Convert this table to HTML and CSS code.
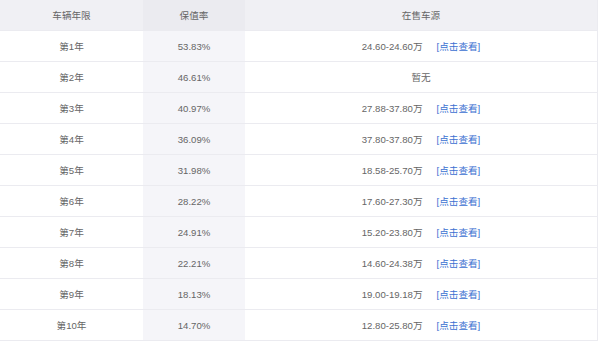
FILE: index.html
```html
<!DOCTYPE html>
<html lang="zh">
<head>
<meta charset="utf-8">
<link rel="stylesheet" href="styles.css">
</head>
<body>
<table class="tbl">
  <colgroup>
    <col class="c1"><col class="c2"><col class="c3">
  </colgroup>
  <thead>
    <tr><th>车辆年限</th><th class="mid">保值率</th><th>在售车源</th></tr>
  </thead>
  <tbody>
    <tr><td>第1年</td><td class="mid">53.83%</td><td><span class="price">24.60-24.60万</span><a class="link">[点击查看]</a></td></tr>
    <tr><td>第2年</td><td class="mid">46.61%</td><td>暂无</td></tr>
    <tr><td>第3年</td><td class="mid">40.97%</td><td><span class="price">27.88-37.80万</span><a class="link">[点击查看]</a></td></tr>
    <tr><td>第4年</td><td class="mid">36.09%</td><td><span class="price">37.80-37.80万</span><a class="link">[点击查看]</a></td></tr>
    <tr><td>第5年</td><td class="mid">31.98%</td><td><span class="price">18.58-25.70万</span><a class="link">[点击查看]</a></td></tr>
    <tr><td>第6年</td><td class="mid">28.22%</td><td><span class="price">17.60-27.30万</span><a class="link">[点击查看]</a></td></tr>
    <tr><td>第7年</td><td class="mid">24.91%</td><td><span class="price">15.20-23.80万</span><a class="link">[点击查看]</a></td></tr>
    <tr><td>第8年</td><td class="mid">22.21%</td><td><span class="price">14.60-24.38万</span><a class="link">[点击查看]</a></td></tr>
    <tr><td>第9年</td><td class="mid">18.13%</td><td><span class="price">19.00-19.18万</span><a class="link">[点击查看]</a></td></tr>
    <tr><td>第10年</td><td class="mid">14.70%</td><td><span class="price">12.80-25.80万</span><a class="link">[点击查看]</a></td></tr>
  </tbody>
</table>
</body>
</html>
```
FILE: styles.css
```css
html, body {
  margin: 0;
  padding: 0;
  background: #ffffff;
}
body {
  font-family: "Liberation Sans", "Noto Sans CJK SC", sans-serif;
  font-size: 9.6px;
  color: #666666;
}
.tbl {
  width: 598px;
  border-collapse: collapse;
  table-layout: fixed;
}
.c1 { width: 143px; }
.c2 { width: 102px; }
.tbl th, .tbl td {
  height: 30px;
  padding: 0;
  text-align: center;
  vertical-align: middle;
  border-bottom: 1px solid #ebebf0;
  font-weight: normal;
}
.tbl td:last-child, .tbl th:last-child {
  border-right: 1px solid #ebebf0;
}
.tbl th {
  background: #f0f0f4;
  color: #666666;
}
.tbl td.mid {
  background: #f5f5f9;
}
.tbl th.mid {
  background: #ebebf0;
}
.price {
  margin-right: 14px;
}
.link {
  color: #3b6fd1;
}
```
